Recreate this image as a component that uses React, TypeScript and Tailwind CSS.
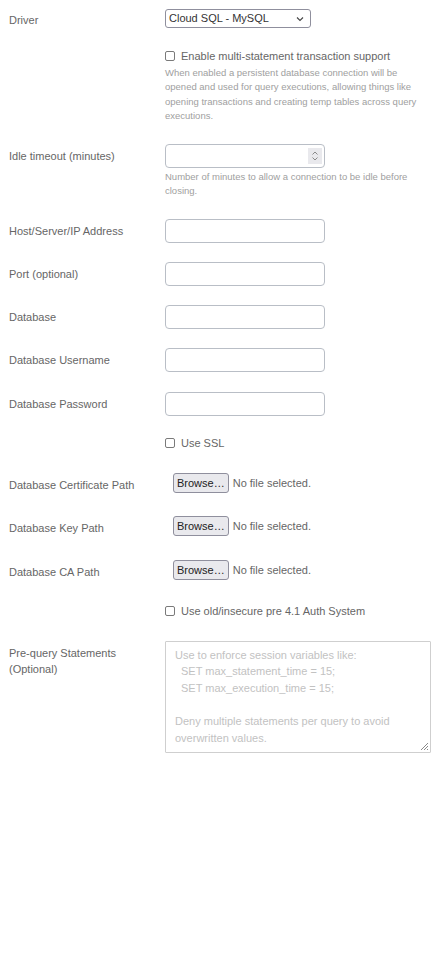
import React from "react"

const font = { fontFamily: '"Liberation Sans", Arial, sans-serif' }

function Label({ children }: { children: React.ReactNode }) {
  return <div className="w-[165px] shrink-0 pl-[9px] pt-[4px] text-[11px] leading-[16px] text-[#666]">{children}</div>
}

function Spacer() {
  return <div className="w-[165px] shrink-0" />
}

function TextInput() {
  return <input type="text" className="w-[160px] h-[24px] rounded-[4px] border border-[#b9bec6] bg-white outline-none" />
}

function Check({ label }: { label: string }) {
  return (
    <label className="flex items-center gap-[6px] text-[11px] leading-[16px] text-[#666]">
      <input type="checkbox" className="appearance-none w-[10px] h-[10px] border border-[#7a7a7a] rounded-[2px] bg-white m-0" />
      {label}
    </label>
  )
}

function FileField() {
  return (
    <div className="flex items-center pl-[8px]">
      <button className="h-[20px] px-[3px] rounded-[3px] border border-[#8f8f9d] bg-[#e9e9ed] text-[11px] leading-[16px] text-[#222]">
        Browse…
      </button>
      <span className="ml-[4px] text-[11px] text-[#666]">No file selected.</span>
    </div>
  )
}

export default function App() {
  return (
    <div className="min-h-[969px] bg-white pt-[8px]" style={font}>
      {/* Driver */}
      <div className="flex">
        <Label>Driver</Label>
        <div className="mt-[1px] w-[146px] h-[19px] rounded-[3px] border border-[#8f8f9d] flex items-center justify-between pl-[3px] pr-[6px] text-[11px] text-[#333]">
          <span>Cloud SQL - MySQL</span>
          <svg width="8" height="6" viewBox="0 0 8 6" fill="none">
            <path d="M1 1.5 L4 4.5 L7 1.5" stroke="#444" strokeWidth="1.1" />
          </svg>
        </div>
      </div>

      {/* Multi statement */}
      <div className="flex mt-[20px]">
        <Spacer />
        <div>
          <Check label="Enable multi-statement transaction support" />
          <p className="mt-[2px] w-[262px] text-[9.5px] leading-[14.3px] text-[#a0a0a0]">
            When enabled a persistent database connection will be opened and used for query executions, allowing things like opening transactions and creating temp tables across query executions.
          </p>
        </div>
      </div>

      {/* Idle timeout */}
      <div className="flex mt-[21px]">
        <Label>Idle timeout (minutes)</Label>
        <div>
          <div className="w-[160px] h-[24px] rounded-[4px] border border-[#b9bec6] flex items-center justify-end pr-[2px]">
            <div className="w-[14px] h-[16px] bg-[#e9e9ed] flex flex-col items-center justify-center gap-[2px]">
              <svg width="6" height="4" viewBox="0 0 6 4" fill="none"><path d="M0.5 3.5 L3 1 L5.5 3.5" stroke="#8a8a8a" strokeWidth="1" /></svg>
              <svg width="6" height="4" viewBox="0 0 6 4" fill="none"><path d="M0.5 0.5 L3 3 L5.5 0.5" stroke="#8a8a8a" strokeWidth="1" /></svg>
            </div>
          </div>
          <p className="mt-[2px] w-[262px] text-[9.5px] leading-[14.3px] text-[#a0a0a0]">
            Number of minutes to allow a connection to be idle before closing.
          </p>
        </div>
      </div>

      <div className="flex mt-[20px]">
        <Label>Host/Server/IP Address</Label>
        <TextInput />
      </div>
      <div className="flex mt-[19px]">
        <Label>Port (optional)</Label>
        <TextInput />
      </div>
      <div className="flex mt-[19px]">
        <Label>Database</Label>
        <TextInput />
      </div>
      <div className="flex mt-[19px]">
        <Label>Database Username</Label>
        <TextInput />
      </div>
      <div className="flex mt-[20px]">
        <Label>Database Password</Label>
        <TextInput />
      </div>

      <div className="flex mt-[19px]">
        <Spacer />
        <Check label="Use SSL" />
      </div>

      <div className="flex mt-[22px]">
        <Label>Database Certificate Path</Label>
        <FileField />
      </div>
      <div className="flex mt-[23px]">
        <Label>Database Key Path</Label>
        <FileField />
      </div>
      <div className="flex mt-[24px]">
        <Label>Database CA Path</Label>
        <FileField />
      </div>

      <div className="flex mt-[23px]">
        <Spacer />
        <Check label="Use old/insecure pre 4.1 Auth System" />
      </div>

      {/* Pre-query */}
      <div className="flex mt-[22px]">
        <Label>
          Pre-query Statements
          <br />
          (Optional)
        </Label>
        <div className="relative w-[266px] h-[112px] border border-[#cfcfcf] rounded-[1px] pl-[9px] pt-[5px] text-[11px] leading-[16.6px] text-[#c2c2c2]">
          <div>Use to enforce session variables like:</div>
          <div className="pl-[6px]">SET max_statement_time = 15;</div>
          <div className="pl-[6px]">SET max_execution_time = 15;</div>
          <div>&nbsp;</div>
          <div>Deny multiple statements per query to avoid</div>
          <div>overwritten values.</div>
          <svg className="absolute right-[1px] bottom-[1px]" width="10" height="10" viewBox="0 0 10 10" fill="none">
            <path d="M9 2 L2 9 M9 5 L5 9 M9 8 L8 9" stroke="#8a8a8a" strokeWidth="1" />
          </svg>
        </div>
      </div>
    </div>
  )
}
